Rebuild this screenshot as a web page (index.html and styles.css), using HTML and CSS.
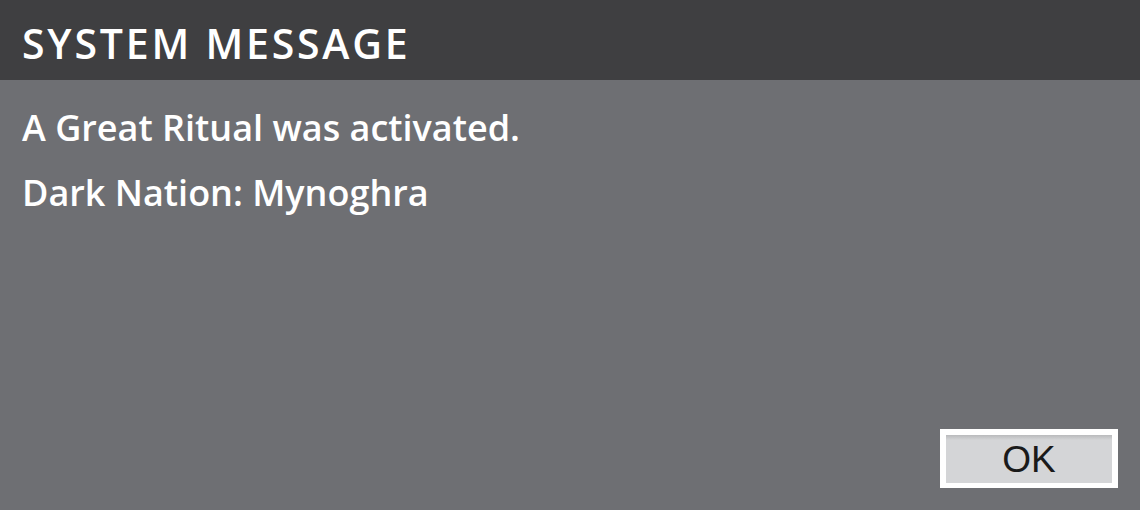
FILE: index.html
```html
<!DOCTYPE html>
<html lang="en">

<head>
    <meta charset="UTF-8">
    <title>System Message</title>
    <link rel="stylesheet" href="styles.css">
</head>

<body>
    <div class="dialog">
        <div class="title">SYSTEM MESSAGE</div>

        <div class="message">
            <p>A Great Ritual was activated.</p>
            <p>Dark Nation: Mynoghra</p>
        </div>

        <div class="actions">
            <div class="btn">OK</div>
        </div>
    </div>
</body>

</html>
```

FILE: styles.css
```css
body,
div,
p {
    margin: 0;
    padding: 0;
}

body {
    font-family: "Open Sans", "Liberation Sans", sans-serif;
    background: #6e6f73;
}

.dialog {
    width: 1140px;
    height: 510px;
    display: flex;
    flex-direction: column;
    background: #6e6f73;
}

.title {
    height: 80px;
    box-sizing: border-box;
    padding-left: 22px;
    background: #3f3f41;
    color: #fff;
    font-size: 41px;
    font-weight: 600;
    letter-spacing: 2.8px;
    line-height: 87px;
    overflow: hidden;
}

.message {
    padding: 15px 0 0 22px;
    color: #fff;
    font-size: 36px;
    font-weight: 600;
}

.message p {
    height: 65px;
    line-height: 65px;
}

.actions {
    margin-top: auto;
    display: flex;
    justify-content: flex-end;
    padding: 0 22px 22px 0;
}

.btn {
    width: 166px;
    height: 48px;
    border: 6px solid #fff;
    border-bottom-width: 5px;
    background: linear-gradient(#b9babc, #d4d5d7 5px);
    color: #1a1a1a;
    font-family: "Liberation Sans", sans-serif;
    font-size: 37px;
    line-height: 50px;
    text-align: center;
}
```
